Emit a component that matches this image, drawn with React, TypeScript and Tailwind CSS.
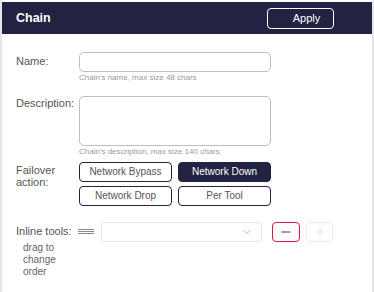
import { ChevronDown, Minus, Plus } from "lucide-react";

const failoverOptions = ["Network Bypass", "Network Down", "Network Drop", "Per Tool"];

export default function App() {
  const selected = "Network Down";

  return (
    <div className="w-[374px] h-[292px] bg-white border-x-2 border-[#e4e4ea] pt-[2px] font-['Liberation_Sans',Arial,sans-serif] overflow-hidden">
      <div className="h-[32px] bg-[#222243] flex items-center justify-between pl-[14px] pr-[38px]">
        <span className="text-white font-bold text-[12.5px]">Chain</span>
        <button className="w-[67px] h-[21px] border border-white rounded-[4px] text-white text-[11px] pl-[12px] leading-none">
          Apply
        </button>
      </div>

      <div className="pl-[14px] pt-[18px]">
        {/* name */}
        <div className="flex">
          <label className="w-[63px] text-[11px] leading-[13px] text-[#555] pt-[3px]">Name:</label>
          <div>
            <input className="block w-[192px] h-[20px] border border-[#bdbdc2] rounded-[5px] outline-none" />
            <p className="text-[8px] leading-[10px] text-[#9a9a9a] mt-[1px]">Chain's name, max size 48 chars</p>
          </div>
        </div>

        {/* description */}
        <div className="flex mt-[13px]">
          <label className="w-[63px] text-[11px] leading-[13px] text-[#555] pt-[1px]">Description:</label>
          <div>
            <textarea className="block w-[192px] h-[50px] border border-[#bdbdc2] rounded-[5px] outline-none resize-none" />
            <p className="text-[8px] leading-[10px] text-[#9a9a9a] mt-[1px]">Chain's description, max size 140 chars</p>
          </div>
        </div>

        {/* failover */}
        <div className="flex mt-[5px]">
          <label className="w-[63px] text-[11px] leading-[12px] text-[#555] pt-[2px]">
            Failover
            <br />
            action:
          </label>
          <div className="grid grid-cols-2 gap-x-[6px] gap-y-[4px] w-[192px]">
            {failoverOptions.map((opt) => (
              <button
                key={opt}
                className={
                  opt === selected
                    ? "h-[20px] rounded-[4px] border border-[#222243] bg-[#222243] text-white text-[10px] leading-none"
                    : "h-[20px] rounded-[4px] border border-[#222243] bg-white text-[#555] text-[10px] leading-none"
                }
              >
                {opt}
              </button>
            ))}
          </div>
        </div>

        {/* inline tools */}
        <div className="flex mt-[16px]">
          <div className="w-[63px]">
            <div className="text-[11px] leading-[13px] text-[#555] pt-[3px]">Inline tools:</div>
            <div className="text-[10px] leading-[12px] text-[#666] pl-[7px] pt-[4px]">
              drag to
              <br />
              change
              <br />
              order
            </div>
          </div>
          <div className="flex flex-col gap-[1px] w-[16px] pt-[7px] -ml-[1px]">
            <div className="h-[1px] bg-[#8a8a96]" />
            <div className="h-[1px] bg-[#8a8a96]" />
            <div className="h-[1px] bg-[#8a8a96]" />
          </div>
          <div className="ml-[7px] w-[161px] h-[20px] border border-[#e6e6ee] rounded-[4px] flex items-center justify-end pr-[8px]">
            <ChevronDown size={12} strokeWidth={1.5} className="text-[#999]" />
          </div>
          <button className="ml-[10px] w-[28px] h-[20px] border border-[#e0193a] rounded-[4px] flex items-center justify-center">
            <Minus size={14} strokeWidth={1.5} className="text-[#222243]" />
          </button>
          <button className="ml-[6px] w-[27px] h-[20px] border border-[#eaeaf0] rounded-[4px] flex items-center justify-center">
            <Plus size={12} strokeWidth={1.5} className="text-[#d6d6dc]" />
          </button>
        </div>
      </div>
    </div>
  );
}
